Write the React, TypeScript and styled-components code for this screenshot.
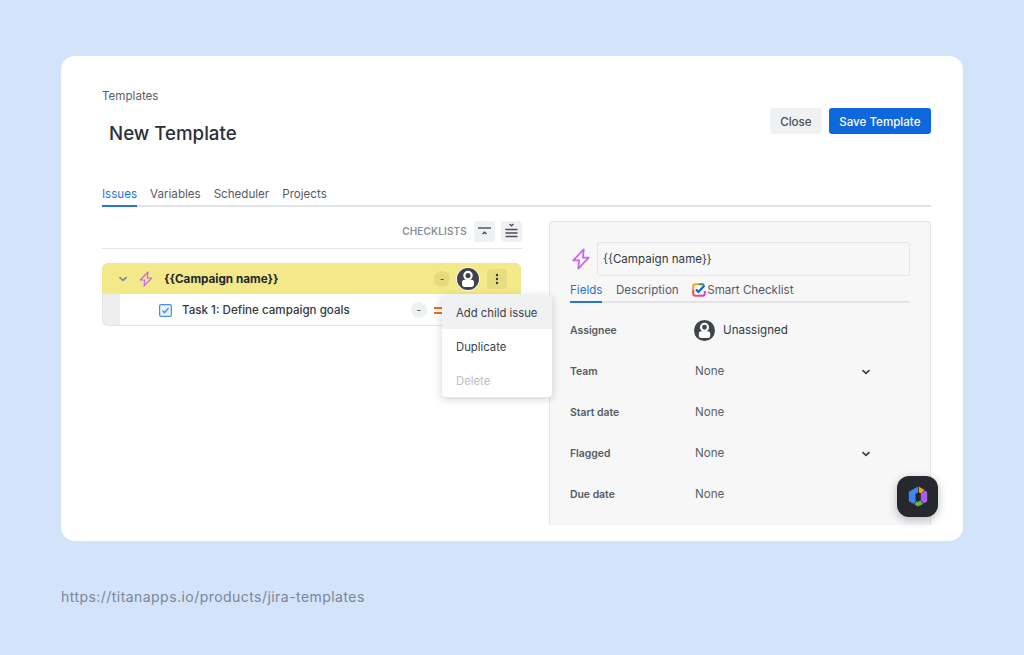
import React from "react";
import styled, { createGlobalStyle } from "styled-components";

const Global = createGlobalStyle`
  html, body { margin: 0; padding: 0; background: #d3e3f9; }
  * { box-sizing: border-box; }
  body { font-family: Inter, "Liberation Sans", sans-serif; color: #2c3038; }
`;

const Page = styled.div`
  width: 1024px;
  height: 655px;
  padding: 56px 61px 0;
  overflow: hidden;
  background: #d3e3f9;
`;

const Card = styled.main`
  position: relative;
  width: 902px;
  height: 485px;
  padding: 32px 32px 0 41px;
  background: #fff;
  border-radius: 14px;
`;

const Header = styled.header`
  display: flex;
  justify-content: space-between;
  align-items: flex-start;
  height: 95px;
`;

const Crumb = styled.div`
  font-size: 11.6px;
  line-height: 16px;
  color: #5b6068;
`;

const Title = styled.h1`
  margin: 16px 0 0 7px;
  font-size: 18.7px;
  line-height: 28px;
  font-weight: 500;
  color: #2c3038;
`;

const Actions = styled.div`
  display: flex;
  gap: 7px;
  margin-top: 20px;
`;

const Button = styled.button<{ $primary?: boolean }>`
  height: 26px;
  padding: 1px ${(p) => (p.$primary ? "10.5px" : "10px")} 0;
  border: 0;
  border-radius: 3px;
  font: 500 11.6px Inter, sans-serif;
  background: ${(p) => (p.$primary ? "#0f67dc" : "#f0f1f3")};
  color: ${(p) => (p.$primary ? "#fff" : "#4a4f57")};
`;

const Tabs = styled.nav<{ $gap: number; $mb?: number }>`
  display: flex;
  gap: ${(p) => p.$gap}px;
  border-bottom: 2px solid #e1e3e6;
  margin-bottom: ${(p) => p.$mb ?? 0}px;
`;

const Tab = styled.span<{ $active?: boolean }>`
  display: flex;
  align-items: center;
  gap: 1px;
  height: 24px;
  margin-bottom: -2px;
  padding-bottom: 1px;
  font-size: 11.6px;
  color: ${(p) => (p.$active ? "#2a74d6" : "#565b63")};
  border-bottom: 2px solid ${(p) => (p.$active ? "#2a74d6" : "transparent")};
`;

const Columns = styled.div`
  display: grid;
  grid-template-columns: 419px 382px;
  column-gap: 28px;
  margin-top: 14px;
`;

const Toolbar = styled.div`
  display: flex;
  align-items: center;
  justify-content: flex-end;
  gap: 6px;
  height: 28px;
  margin-right: -1px;
  padding-bottom: 7px;
  border-bottom: 1px solid #e3e5e8;
  margin-bottom: 14px;
`;

const ToolLabel = styled.span`
  font-size: 10px;
  font-weight: 600;
  letter-spacing: 0.15px;
  color: #8b9098;
  margin-right: 1px;
`;

const ToolButton = styled.span`
  display: flex;
  align-items: center;
  justify-content: center;
  width: 21px;
  height: 21px;
  border-radius: 3px;
  background: #f0f1f3;
`;

const Tree = styled.div`
  border: 1px solid #e3e5e8;
  border-top: 0;
  border-radius: 6px;
  background: #eceef0;
`;

const ParentRow = styled.div`
  display: flex;
  align-items: center;
  height: 31px;
  margin: 0 -1px;
  padding: 0 14px 0 16px;
  background: #f3e88a;
  border-radius: 6px 6px 0 0;
`;

const ChevronGap = styled.span`
  width: 10px;
`;

const ParentName = styled.span`
  margin-left: 10px;
  font-size: 11.7px;
  font-weight: 700;
  color: #24272c;
`;

const Spacer = styled.span`
  flex: 1;
`;

const Dash = styled.span<{ $tone: "yellow" | "grey" }>`
  display: flex;
  align-items: center;
  justify-content: center;
  width: 16px;
  height: 16px;
  border-radius: 50%;
  font-size: 10px;
  color: #444;
  background: ${(p) => (p.$tone === "yellow" ? "#e5da7e" : "#eff0f2")};
`;

const AvatarRing = styled.span`
  display: flex;
  margin: 0 7px 0 6px;
  border-radius: 50%;
  border: 1px solid #fff;
`;

const More = styled.span`
  display: flex;
  align-items: center;
  justify-content: center;
  width: 20px;
  height: 20px;
  border-radius: 3px;
  background: #e7dc80;
`;

const ChildRow = styled.div`
  display: flex;
  align-items: center;
  height: 31px;
  margin-left: 17px;
  padding: 1px 0 0 39px;
  background: #fff;
  border-radius: 0 0 6px 0;
`;

const ChildName = styled.span`
  margin-left: 10px;
  font-size: 11.6px;
  font-weight: 500;
  color: #34383f;
`;

const ChildDash = styled.span`
  display: flex;
  margin-left: 61px;
`;

const Priority = styled.span`
  display: block;
  width: 10px;
  height: 7px;
  margin-left: 7px;
  border-top: 2px solid #e5711c;
  border-bottom: 2px solid #e5711c;
`;

const Menu = styled.ul`
  position: absolute;
  left: 381px;
  top: 239px;
  width: 110px;
  height: 102px;
  margin: 0;
  padding: 0;
  list-style: none;
  background: #fff;
  border-radius: 4px;
  box-shadow: 0 2px 8px rgba(30, 40, 60, 0.22);
`;

const MenuItem = styled.li<{ $hover?: boolean; $disabled?: boolean }>`
  display: flex;
  align-items: center;
  height: 34px;
  padding: 2px 0 0 14px;
  font-size: 11.3px;
  color: ${(p) => (p.$disabled ? "#bcc0c6" : "#3c4047")};
  background: ${(p) => (p.$hover ? "#f0f1f3" : "transparent")};
  border-radius: ${(p) => (p.$hover ? "4px 4px 0 0" : "0")};
`;

const Panel = styled.section`
  height: 304px;
  padding: 20px 20px 0;
  background: #f7f7f8;
  border: 1px solid #e3e5e8;
  border-bottom: 0;
  border-radius: 3px 3px 0 0;
`;

const NameRow = styled.div`
  display: flex;
  align-items: center;
  gap: 5px;
  margin-bottom: 3px;
`;

const NameInput = styled.div`
  flex: 1;
  height: 34px;
  display: flex;
  align-items: center;
  padding-left: 5px;
  font-size: 11.6px;
  color: #34383f;
  border: 1px solid #e3e5e8;
  border-radius: 3px;
`;

const FieldRow = styled.div`
  display: grid;
  grid-template-columns: 125px 1fr 20px;
  align-items: center;
  height: 41px;
  padding-right: 29px;
`;

const FieldLabel = styled.span`
  font-size: 10.4px;
  font-weight: 600;
  color: #565b63;
`;

const FieldValue = styled.span`
  display: flex;
  align-items: center;
  gap: 8px;
  margin-top: -1px;
  font-size: 11.6px;
  color: #5b6068;
`;

const AssigneeValue = styled(FieldValue)`
  margin-left: -1px;
`;

const StrongValue = styled.span`
  color: #34383f;
`;

const Fab = styled.div`
  position: absolute;
  left: 836px;
  top: 420px;
  width: 41px;
  height: 41px;
  display: flex;
  align-items: center;
  justify-content: center;
  border-radius: 12px;
  background: #26282d;
  box-shadow: 0 3px 10px rgba(20, 25, 35, 0.28);
`;

const Source = styled.footer`
  margin-top: 47px;
  font-family: Inter, "Liberation Sans", sans-serif;
  font-size: 14px;
  letter-spacing: 0.45px;
  line-height: 18px;
  color: #7a869c;
`;

const Bolt = ({ size, width }: { size: number; width: number }) => (
  <svg width={size} height={size} viewBox="0 0 24 24" fill="none" stroke="#c766ec" strokeWidth={width} strokeLinejoin="round">
    <path d="M15 1.500 3.500 13.500h6.500L9 22.500 20.500 10.500H14L15 1.500Z" />
  </svg>
);

const Person = ({ size }: { size: number }) => (
  <svg width={size} height={size} viewBox="0 0 24 24">
    <circle cx="12" cy="12" r="12" fill="#3f434b" />
    <circle cx="12" cy="8.300" r="4" fill="none" stroke="#fff" strokeWidth="2.400" />
    <path d="M5.500 15.300c0-1.500 1.100-2.500 2.500-2.500h8c1.400 0 2.500 1 2.500 2.500v3a2.300 2.300 0 0 1-2.300 2.300H7.800a2.300 2.300 0 0 1-2.300-2.300Z" fill="#fff" />
  </svg>
);

const Chevron = ({ color }: { color: string }) => (
  <svg width="10" height="10" viewBox="0 0 10 10" fill="none" stroke={color} strokeWidth="1.800" strokeLinecap="round" strokeLinejoin="round">
    <path d="m2 3.600 3 2.800 3-2.800" />
  </svg>
);

const Dots = () => (
  <svg width="4" height="12" viewBox="0 0 4 12" fill="#34383f">
    <circle cx="2" cy="2" r="1.200" />
    <circle cx="2" cy="6" r="1.200" />
    <circle cx="2" cy="10" r="1.200" />
  </svg>
);

const Collapse = () => (
  <svg width="15" height="12" viewBox="0 0 15 12" fill="none" stroke="#4a4f57" strokeWidth="1.400">
    <path d="M1 3h13" />
    <path d="m5.500 9 2-1.800 2 1.800" />
  </svg>
);

const Expand = () => (
  <svg width="15" height="17" viewBox="0 0 15 17" fill="none" stroke="#4a4f57" strokeWidth="1.400">
    <path d="m5.500 1 2 1.800 2-1.800" />
    <path d="M1.500 6.500h12M1.500 10h12M1.500 13.500h12" />
  </svg>
);

const Checkbox = () => (
  <svg width="13" height="13" viewBox="0 0 13 13" fill="none">
    <rect x=".6" y=".6" width="11.800" height="11.800" rx="1.500" fill="#e9f1fd" stroke="#4c8ee6" strokeWidth="1.200" />
    <path d="m3.500 6.700 2 2 4-4.600" stroke="#2f73d2" strokeWidth="1.100" />
  </svg>
);

const SmartLogo = () => (
  <svg width="14" height="14" viewBox="0 0 14 14" fill="none">
    <path d="M7 1.200H3.500A2.300 2.300 0 0 0 1.200 3.500v3" stroke="#f0a51e" strokeWidth="2" />
    <path d="M1.200 6.500v4a2.300 2.300 0 0 0 2.300 2.300H7" stroke="#ef4d5a" strokeWidth="2" />
    <path d="M7 12.800h3.500a2.300 2.300 0 0 0 2.300-2.300V8" stroke="#d93fc0" strokeWidth="2" />
    <path d="M7 1.200h3.500a2.300 2.300 0 0 1 1.600.6" stroke="#2f9e5b" strokeWidth="2" />
    <path d="m4 6.500 2.400 2.400L12.500 2.500" stroke="#1d5fd0" strokeWidth="2.200" />
  </svg>
);

const TitanLogo = () => (
  <svg width="20" height="21" viewBox="0 0 20 21" fill="none">
    <path d="M10.800 .6 16.500 4 13 7.400 10.800 6.200Z" fill="#f4a11d" />
    <path d="M17 4.500 19.200 6V15.500L15.500 17.500 12.800 13.800V7.800Z" fill="#a860ea" />
    <path d="M12.500 14.200 15 18 10 20.600 6.500 18.500 8.500 15.200 10 16Z" fill="#6fb13f" />
    <path d="M10 .6V6.400L7.500 7.800V13.500L8 14.800 6 18 .8 15.200V5.800Z" fill="#3d86ee" />
  </svg>
);

const fields = [
  { label: "Team", value: "None", chevron: true },
  { label: "Start date", value: "None" },
  { label: "Flagged", value: "None", chevron: true },
  { label: "Due date", value: "None" },
];

export default function App() {
  return (
    <Page>
      <Global />
      <Card>
        <Header>
          <div>
            <Crumb>Templates</Crumb>
            <Title>New Template</Title>
          </div>
          <Actions>
            <Button>Close</Button>
            <Button $primary>Save Template</Button>
          </Actions>
        </Header>
        <Tabs $gap={13}>
          <Tab $active>Issues</Tab>
          <Tab>Variables</Tab>
          <Tab>Scheduler</Tab>
          <Tab>Projects</Tab>
        </Tabs>
        <Columns>
          <div>
            <Toolbar>
              <ToolLabel>CHECKLISTS</ToolLabel>
              <ToolButton><Collapse /></ToolButton>
              <ToolButton><Expand /></ToolButton>
            </Toolbar>
            <Tree>
              <ParentRow>
                <Chevron color="#7f8a99" />
                <ChevronGap />
                <Bolt size={16} width={1.8} />
                <ParentName>{"{{Campaign name}}"}</ParentName>
                <Spacer />
                <Dash $tone="yellow">-</Dash>
                <AvatarRing><Person size={22} /></AvatarRing>
                <More><Dots /></More>
              </ParentRow>
              <ChildRow>
                <Checkbox />
                <ChildName>Task 1: Define campaign goals</ChildName>
                <ChildDash><Dash $tone="grey">-</Dash></ChildDash>
                <Priority />
              </ChildRow>
            </Tree>
          </div>
          <Panel>
            <NameRow>
              <Bolt size={22} width={1.9} />
              <NameInput>{"{{Campaign name}}"}</NameInput>
            </NameRow>
            <Tabs $gap={13.5} $mb={7}>
              <Tab $active>Fields</Tab>
              <Tab>Description</Tab>
              <Tab><SmartLogo />Smart Checklist</Tab>
            </Tabs>
            <FieldRow>
              <FieldLabel>Assignee</FieldLabel>
              <AssigneeValue><Person size={21} /><StrongValue>Unassigned</StrongValue></AssigneeValue>
            </FieldRow>
            {fields.map((f) => (
              <FieldRow key={f.label}>
                <FieldLabel>{f.label}</FieldLabel>
                <FieldValue>{f.value}</FieldValue>
                {f.chevron ? <Chevron color="#3f434b" /> : <span />}
              </FieldRow>
            ))}
          </Panel>
        </Columns>
        <Menu>
          <MenuItem $hover>Add child issue</MenuItem>
          <MenuItem>Duplicate</MenuItem>
          <MenuItem $disabled>Delete</MenuItem>
        </Menu>
        <Fab><TitanLogo /></Fab>
      </Card>
      <Source>https://titanapps.io/products/jira-templates</Source>
    </Page>
  );
}
